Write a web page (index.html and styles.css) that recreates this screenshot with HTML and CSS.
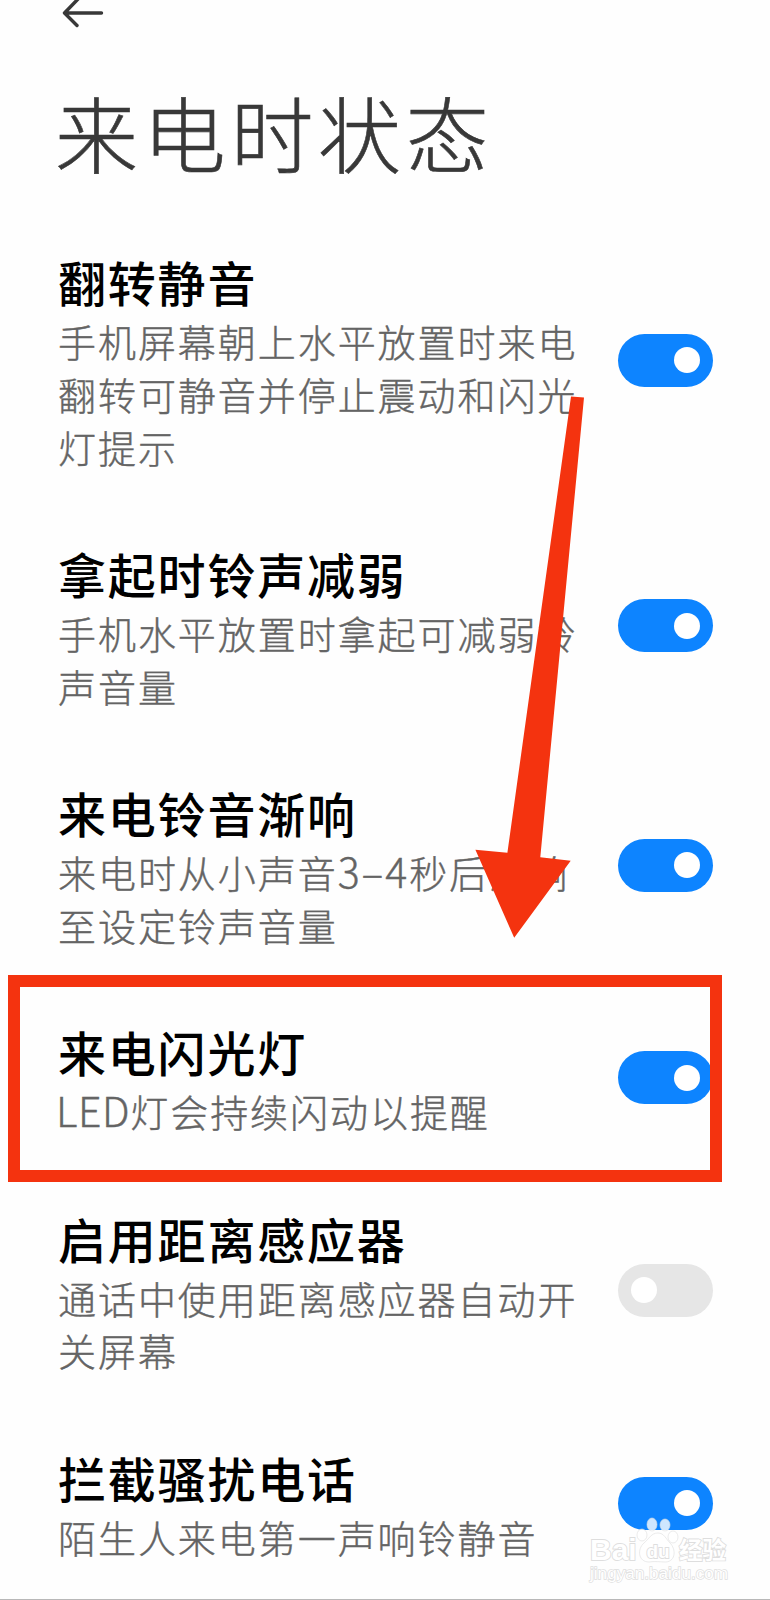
FILE: index.html
```html
<!DOCTYPE html>
<html lang="zh-CN">
<head>
    <meta charset="UTF-8">
    <meta name="viewport" content="width=device-width, initial-scale=1.0">
    <title>来电时状态</title>
    <link rel="stylesheet" href="styles.css">
</head>
<body>

<div class="page">
    <header class="header">
        <svg class="back" width="44" height="32" viewBox="0 0 44 32">
            <path d="M18 -1 L4.500 13 L17 25.500 M5 13 H41.500"/>
        </svg>
        <h1>来电时状态</h1>
    </header>

    <main class="settings">
        <div class="row">
            <div class="text">
                <h2>翻转静音</h2>
                <p>手机屏幕朝上水平放置时来电<br>翻转可静音并停止震动和闪光<br>灯提示</p>
            </div>
            <div class="switch on"></div>
        </div>

        <div class="row">
            <div class="text">
                <h2>拿起时铃声减弱</h2>
                <p>手机水平放置时拿起可减弱铃<br>声音量</p>
            </div>
            <div class="switch on"></div>
        </div>

        <div class="row">
            <div class="text">
                <h2>来电铃音渐响</h2>
                <p>来电时从小声音<span class="num">3–4</span>秒后渐响<br>至设定铃声音量</p>
            </div>
            <div class="switch on"></div>
        </div>

        <div class="row">
            <div class="text">
                <h2>来电闪光灯</h2>
                <p><span class="latin">LED</span>灯会持续闪动以提醒</p>
            </div>
            <div class="switch on"></div>
        </div>

        <div class="row">
            <div class="text">
                <h2>启用距离感应器</h2>
                <p>通话中使用距离感应器自动开<br>关屏幕</p>
            </div>
            <div class="switch"></div>
        </div>

        <div class="row">
            <div class="text">
                <h2>拦截骚扰电话</h2>
                <p>陌生人来电第一声响铃静音</p>
            </div>
            <div class="switch on"></div>
        </div>
    </main>

    <!-- red marks over the list -->
    <div class="highlight"></div>
    <svg class="arrow" width="120" height="550" viewBox="470 392 120 550">
        <polygon points="571,396.500 584,397.500 540.300,857.300 570.700,860.700 514.200,937.700 475.400,849.700 507.400,852.700"/>
    </svg>

    <svg class="watermark" width="150" height="80" viewBox="585 1510 150 80">
        <g class="paw">
            <ellipse cx="642" cy="1535" rx="5" ry="6"/>
            <ellipse cx="652" cy="1524.500" rx="5" ry="6.500"/>
            <ellipse cx="665" cy="1525" rx="5" ry="6"/>
            <ellipse cx="673" cy="1537" rx="5" ry="6"/>
            <path d="M658 1533 c6 0 8 6 12 10 c6 6 6 18 -4 19 c-5 0 -12 -1 -17 0 c-11 0 -12 -13 -5 -19 c5 -4 7 -10 14 -10z"/>
        </g>
        <text class="brand" x="590" y="1560">Bai</text>
        <text class="du" x="646.500" y="1558">du</text>
        <text class="cn" x="679" y="1559">经验</text>
        <text class="url" x="590" y="1579" textLength="138" lengthAdjust="spacingAndGlyphs">jingyan.baidu.com</text>
    </svg>
</div>

</body>
</html>
```
FILE: styles.css
```css
body {
    margin: 0;
    background: rgb(254, 254, 254);
    font-family: "Noto Sans CJK SC", sans-serif;
}
.page {
    position: relative;
    width: 770px;
    height: 1600px;
    box-sizing: border-box;
    border-bottom: 1px solid rgb(184, 184, 184);
    overflow: hidden;
}
.header {
    height: 248.3px;
    padding-left: 55px;
    box-sizing: border-box;
}
.back {
    display: block;
    margin-left: 5px;
    fill: none;
    stroke: rgb(56, 56, 56);
    stroke-width: 3.4;
    stroke-linecap: round;
    stroke-linejoin: round;
}
h1 {
    margin: 39px 0 0;
    font-size: 83px;
    line-height: 120px;
    font-weight: 300;
    letter-spacing: 4.7px;
    color: rgb(56, 56, 56);
    -webkit-text-stroke: 0.6px rgb(56, 56, 56);
}
.row {
    display: flex;
    align-items: center;
    justify-content: space-between;
    padding: 0 57px 66.5px 58px;
}
.text {
    white-space: nowrap;
}
h2 {
    margin: 0;
    font-size: 48px;
    line-height: 67px;
    font-weight: 500;
    letter-spacing: 1.8px;
    color: black;
}
p {
    margin: 0;
    font-size: 38px;
    line-height: 52.8px;
    font-weight: 300;
    letter-spacing: 1.95px;
    color: rgb(100, 100, 100);
    -webkit-text-stroke: 0.4px rgb(100, 100, 100);
}
.num,
.latin {
    font-size: 41px;
    line-height: 1;
}
.latin {
    margin-left: -2px;
    letter-spacing: 0.6px;
}
.switch {
    display: flex;
    align-items: center;
    width: 95.5px;
    height: 53px;
    padding: 0 13px;
    margin-bottom: 1px;
    box-sizing: border-box;
    border-radius: 27px;
    background: rgb(230, 230, 230);
}
.switch::after {
    content: "";
    width: 26px;
    height: 26px;
    border-radius: 50%;
    background: white;
}
.switch.on {
    justify-content: flex-end;
    background: rgb(13, 132, 255);
}
.highlight {
    position: absolute;
    left: 8px;
    top: 975px;
    width: 714px;
    height: 207px;
    box-sizing: border-box;
    border: 12.5px solid rgb(244, 51, 15);
}
.arrow {
    position: absolute;
    left: 470px;
    top: 392px;
    fill: rgb(244, 51, 15);
}
.watermark {
    position: absolute;
    left: 585px;
    top: 1510px;
    fill: white;
    stroke: rgb(222, 222, 222);
    stroke-width: 1;
}
.watermark text {
    font-family: "Liberation Sans", "Noto Sans CJK SC", sans-serif;
    font-weight: bold;
    paint-order: stroke;
    stroke-width: 1.8;
}
.paw {
    fill-opacity: 0.8;
    stroke-opacity: 0.6;
}
.watermark .brand {
    font-size: 30px;
}
.watermark .du {
    font-size: 19px;
}
.watermark .cn {
    font-size: 23.5px;
}
.watermark .url {
    font-size: 16px;
    font-weight: normal;
    stroke-width: 1.4;
}
```
